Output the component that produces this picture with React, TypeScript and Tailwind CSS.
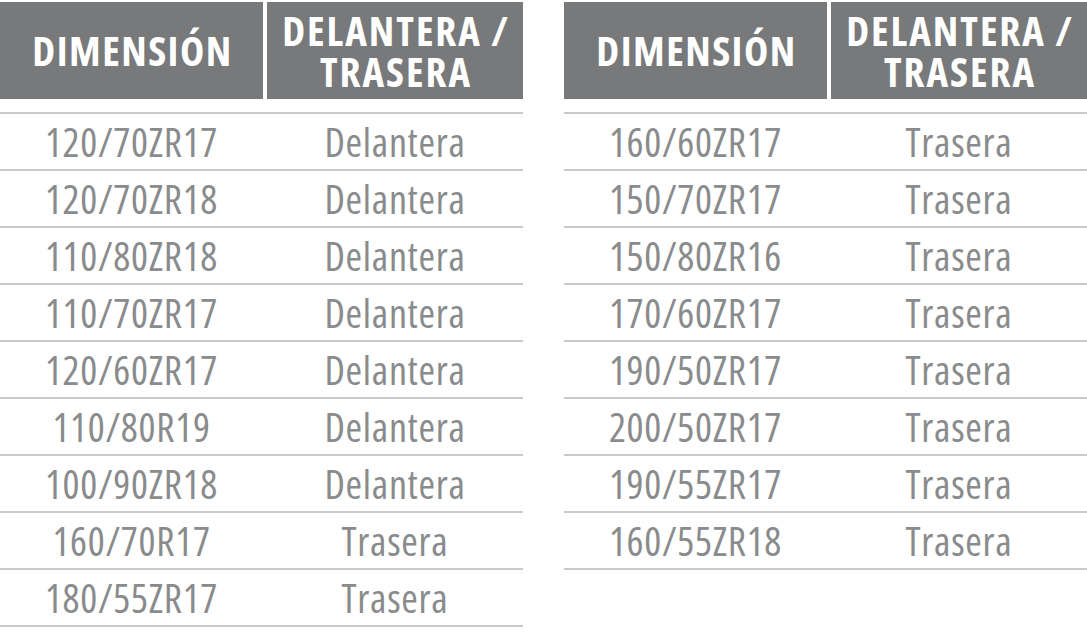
const left: [string, string][] = [
  ['120/70ZR17', 'Delantera'],
  ['120/70ZR18', 'Delantera'],
  ['110/80ZR18', 'Delantera'],
  ['110/70ZR17', 'Delantera'],
  ['120/60ZR17', 'Delantera'],
  ['110/80R19', 'Delantera'],
  ['100/90ZR18', 'Delantera'],
  ['160/70R17', 'Trasera'],
  ['180/55ZR17', 'Trasera'],
];

const right: [string, string][] = [
  ['160/60ZR17', 'Trasera'],
  ['150/70ZR17', 'Trasera'],
  ['150/80ZR16', 'Trasera'],
  ['170/60ZR17', 'Trasera'],
  ['190/50ZR17', 'Trasera'],
  ['200/50ZR17', 'Trasera'],
  ['190/55ZR17', 'Trasera'],
  ['160/55ZR18', 'Trasera'],
];

function SizeTable({ rows }: { rows: [string, string][] }) {
  return (
    <div className="w-[523px]">
      <div className="grid h-[97px] grid-cols-[263px_256px] gap-x-[4px] text-white">
        <div className="flex items-center justify-center bg-[#77797a] pl-[2px] text-[41px] leading-none font-bold tracking-[1.5px]">
          DIMENSIÓN
        </div>
        <div className="flex flex-col items-center justify-center whitespace-nowrap bg-[#77797a] pl-[2px] text-center text-[41px] leading-[41px] font-bold tracking-[2px]">
          <span>DELANTERA /</span>
          <span>TRASERA</span>
        </div>
      </div>
      <div className="mt-[13px] border-b-2 border-[#c7cacc]">
        {rows.map(([dim, pos]) => (
          <div
            key={dim}
            className="grid h-[57px] grid-cols-[263px_4px_256px] items-center border-t-2 border-[#c7cacc] text-[40px] leading-none tracking-[0.7px] text-[#898b8c]"
          >
            <span className="text-center">{dim}</span>
            <span />
            <span className="text-center">{pos}</span>
          </div>
        ))}
      </div>
    </div>
  );
}

export default function App() {
  return (
    <div className="flex h-[633px] w-[1087px] gap-[41px] overflow-hidden bg-white pt-[2px] font-['Open_Sans',sans-serif] font-stretch-condensed">
      <SizeTable rows={left} />
      <SizeTable rows={right} />
    </div>
  );
}
